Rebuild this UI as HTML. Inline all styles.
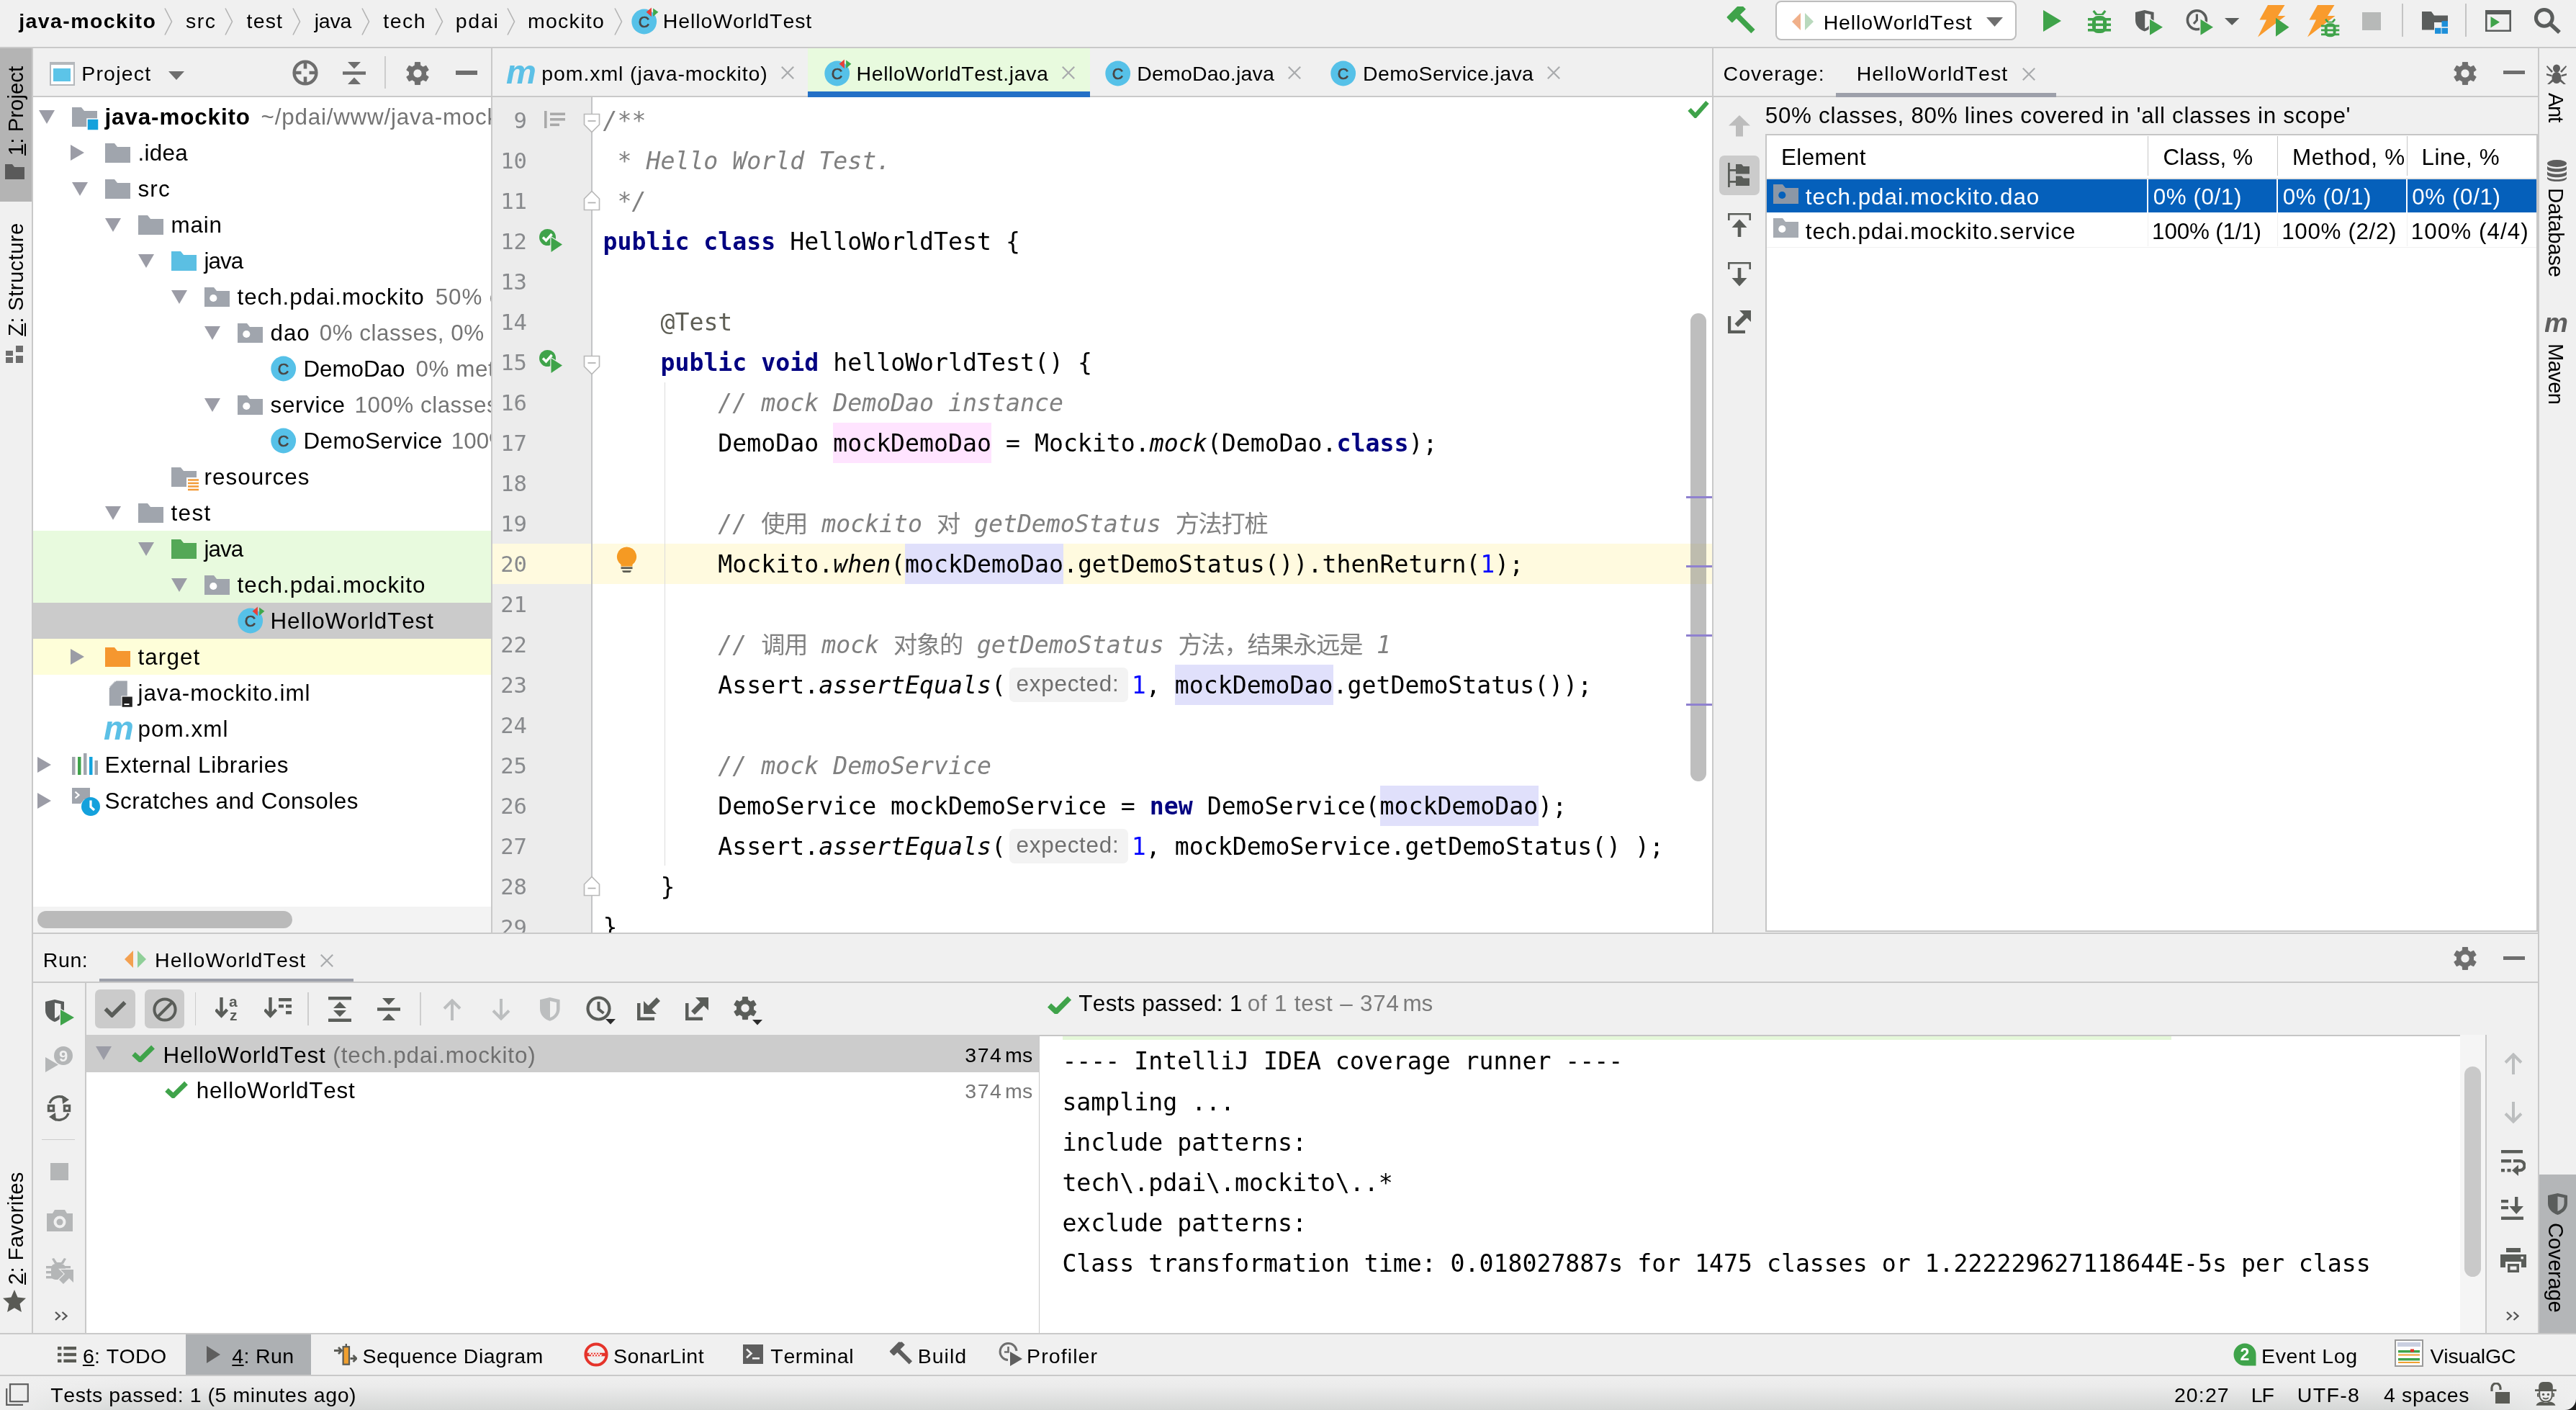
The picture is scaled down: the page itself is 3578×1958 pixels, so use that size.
<!DOCTYPE html>
<html lang="en"><head><meta charset="utf-8"><title>java-mockito – HelloWorldTest.java</title>
<style>
html,body{margin:0;padding:0;}body{width:3578px;height:1958px;position:relative;overflow:hidden;background:#f0f0f0;font-kerning:none;}
#app{will-change:transform;position:absolute;left:0;top:0;width:3578px;height:1958px;overflow:hidden}
#app>*{position:absolute;}
.s{font-family:"Liberation Sans", "Noto Sans CJK SC", sans-serif;white-space:pre;line-height:1;color:#000}
.m{font-family:"DejaVu Sans Mono", "Liberation Mono", "Noto Sans CJK SC", monospace;white-space:pre;line-height:1;color:#000}

</style></head><body><div id="app">
<div style="left:0px;top:0px;width:3578px;height:65px;background:#f0f0f0;"></div>
<div style="left:0px;top:65px;width:3578px;height:2px;background:#c9c9c9;"></div>
<div style="left:0px;top:67px;width:44px;height:1784px;background:#f0f0f0;"></div>
<div style="left:44px;top:67px;width:2px;height:1784px;background:#c9c9c9;"></div>
<div style="left:3527px;top:67px;width:51px;height:1784px;background:#f0f0f0;"></div>
<div style="left:3525px;top:67px;width:2px;height:1784px;background:#c9c9c9;"></div>
<div style="left:46px;top:67px;width:3479px;height:66px;background:#f0f0f0;"></div>
<div style="left:46px;top:133px;width:3479px;height:2px;background:#c9c9c9;"></div>
<div style="left:46px;top:135px;width:636px;height:1160px;background:#fff;"></div>
<div style="left:682px;top:67px;width:2px;height:1228px;background:#c9c9c9;"></div>
<div style="left:684px;top:135px;width:1694px;height:1160px;background:#fff;"></div>
<div style="left:2378px;top:67px;width:2px;height:1228px;background:#c9c9c9;"></div>
<div style="left:2380px;top:135px;width:1145px;height:1160px;background:#f0f0f0;"></div>
<div style="left:46px;top:1295px;width:3479px;height:2px;background:#c9c9c9;"></div>
<div style="left:46px;top:1297px;width:3479px;height:554px;background:#f0f0f0;"></div>
<div style="left:0px;top:1851px;width:3578px;height:2px;background:#c9c9c9;"></div>
<div style="left:0px;top:1853px;width:3578px;height:56px;background:#f0f0f0;"></div>
<div style="left:0px;top:1909px;width:3578px;height:2px;background:#c9c9c9;"></div>
<div style="left:0px;top:1911px;width:3578px;height:47px;background:linear-gradient(to right,#efefef 0%,rgba(239,239,239,0) 5%,rgba(239,239,239,0) 95%,#efefef 100%),linear-gradient(#efefef 0%,#ebebeb 30%,#d5d7d6 100%);"></div>
<span class="s" style="left:26.26px;top:15.07px;font-size:28.5px;font-weight:bold;letter-spacing:1.402px;">java-mockito</span>
<span class="s" style="left:257.93px;top:15.07px;font-size:28.5px;letter-spacing:1.605px;">src</span>
<span class="s" style="left:342.57px;top:15.07px;font-size:28.5px;letter-spacing:1.162px;">test</span>
<span class="s" style="left:436.71px;top:15.07px;font-size:28.5px;letter-spacing:-0.244px;">java</span>
<span class="s" style="left:532.17px;top:15.07px;font-size:28.5px;letter-spacing:1.56px;">tech</span>
<span class="s" style="left:632.68px;top:15.07px;font-size:28.5px;letter-spacing:1.783px;">pdai</span>
<span class="s" style="left:732.92px;top:15.07px;font-size:28.5px;letter-spacing:1.292px;">mockito</span>
<svg style="left:228px;top:11px;" width="12" height="38" viewBox="0 0 12 38"><path d="M1,0.5L10.5,19L1,37.5" stroke="#b3b3b3" stroke-width="1.6" fill="none"/></svg>
<svg style="left:312px;top:11px;" width="12" height="38" viewBox="0 0 12 38"><path d="M1,0.5L10.5,19L1,37.5" stroke="#b3b3b3" stroke-width="1.6" fill="none"/></svg>
<svg style="left:406px;top:11px;" width="12" height="38" viewBox="0 0 12 38"><path d="M1,0.5L10.5,19L1,37.5" stroke="#b3b3b3" stroke-width="1.6" fill="none"/></svg>
<svg style="left:502px;top:11px;" width="12" height="38" viewBox="0 0 12 38"><path d="M1,0.5L10.5,19L1,37.5" stroke="#b3b3b3" stroke-width="1.6" fill="none"/></svg>
<svg style="left:604px;top:11px;" width="12" height="38" viewBox="0 0 12 38"><path d="M1,0.5L10.5,19L1,37.5" stroke="#b3b3b3" stroke-width="1.6" fill="none"/></svg>
<svg style="left:703.5px;top:11px;" width="12" height="38" viewBox="0 0 12 38"><path d="M1,0.5L10.5,19L1,37.5" stroke="#b3b3b3" stroke-width="1.6" fill="none"/></svg>
<svg style="left:852.5px;top:11px;" width="12" height="38" viewBox="0 0 12 38"><path d="M1,0.5L10.5,19L1,37.5" stroke="#b3b3b3" stroke-width="1.6" fill="none"/></svg>
<svg style="left:877px;top:10px;" width="44" height="40" viewBox="0 0 44 40"><circle cx="17.7" cy="20" r="17.4" fill="#56c1e8"/><text x="17.4" y="27.6" font-family="Liberation Sans, sans-serif" font-size="21.5" text-anchor="middle" fill="#4a4644" stroke="#4a4644" stroke-width=".7">C</text><path d="M28.6,-0.5V14.5L19.2,6.8Z" fill="#e8f4f8" opacity=".0"/><path d="M27.9,0.6V13.3L20.6,6.7Z" fill="#e8403a"/><path d="M30.1,1.6V12.9L37.4,6.7Z" fill="#3fa84c"/></svg>
<span class="s" style="left:920.86px;top:15.07px;font-size:28.5px;letter-spacing:0.887px;">HelloWorldTest</span>
<svg style="left:2396px;top:9px;" width="44" height="40" viewBox="0 0 44 40"><g transform="translate(3,3) rotate(-45 16 12)"><rect x="4" y="0" width="24" height="11" rx="1.5" fill="#3fa34a"/><path d="M26,0l5,4v7h-5z" fill="#3fa34a"/><rect x="12.5" y="10" width="7.5" height="30" fill="#3fa34a"/></g></svg>
<div style="left:2466px;top:1px;width:335px;height:55px;background:#fff;border:2px solid #bdbdbd;border-radius:8px;box-sizing:border-box;"></div>
<svg style="left:2489px;top:18px;" width="30" height="24" viewBox="0 0 30 24"><path d="M0,12L12,0V24Z" fill="#f0b08a"/><path d="M18,0L30,12L18,24Z" fill="#b9d9bd"/></svg>
<span class="s" style="left:2532.66px;top:16.87px;font-size:28.5px;letter-spacing:0.872px;">HelloWorldTest</span>
<svg style="left:2759px;top:23.5px;" width="23" height="13" viewBox="0 0 23 13"><path d="M0,0H23L11.5,13Z" fill="#6e6e6e"/></svg>
<svg style="left:2838px;top:14px;" width="25" height="30" viewBox="0 0 25 30"><path d="M0,0L25,15L0,30Z" fill="#3fa34a"/></svg>
<svg style="left:2900px;top:11px;" width="32" height="36" viewBox="0 0 32 36"><g fill="#3fa34a"><path d="M9,3l4,5h6l4-5l2.5,2l-4,5h-11l-4-5z"/><rect x="6" y="11" width="20" height="24" rx="8"/><rect x="0" y="14" width="32" height="3.6"/><rect x="0" y="21.5" width="32" height="3.6"/><rect x="0" y="29" width="32" height="3.6"/></g><rect x="11" y="17.6" width="10" height="3.9" fill="#f0f0f0"/><rect x="11" y="25.1" width="10" height="3.9" fill="#f0f0f0"/></svg>
<svg style="left:2966px;top:14px;" width="40" height="36" viewBox="0 0 40 36"><path d="M0,3L12.8,0L25.6,3V14C25.6,22 20,27 12.8,29.6C5.6,27 0,22 0,14Z" fill="#5a5d5c"/><path d="M13.2,4.5L21.4,6.3V15C21.4,20 18,23.5 13.2,25.5Z" fill="#f0f0f0"/><path d="M20,12.7L38,23.7L20,34.8Z" fill="#3fa34a" stroke="#f0f0f0" stroke-width="2.6" paint-order="stroke"/></svg>
<svg style="left:3036px;top:12px;" width="40" height="38" viewBox="0 0 40 38"><circle cx="15.4" cy="15.8" r="13" fill="none" stroke="#5a5d5c" stroke-width="3.6"/><path d="M15.4,7.5V16L11,21" stroke="#5a5d5c" stroke-width="3.2" fill="none"/><path d="M20.5,14.7L38,25.7L20.5,36.8Z" fill="#3fa34a" stroke="#f0f0f0" stroke-width="2.6" paint-order="stroke"/></svg>
<svg style="left:3090px;top:24.8px;" width="21" height="10" viewBox="0 0 21 10"><path d="M0,0H20.4L10.2,10Z" fill="#5a5d5c"/></svg>
<svg style="left:3136px;top:7px;" width="45" height="46" viewBox="0 0 45 46"><path d="M14,0H37.5L28,15H38.5L0,44.5L12,20.5H2.5Z" fill="#f99b2d"/><path d="M25,17.8L43.5,30.8L25,43.8Z" fill="#3fa34a"/></svg>
<svg style="left:3204.5px;top:7px;" width="46" height="46" viewBox="0 0 46 46"><path d="M14,0H37.5L28,15H38.5L0,44.5L12,20.5H2.5Z" fill="#f99b2d"/><g transform="translate(19,16.5) scale(.79)" fill="#3fa34a" stroke="#f0f0f0" stroke-width="0"><path d="M9,3l4,5h6l4-5l2.5,2l-4,5h-11l-4-5z"/><rect x="6" y="11" width="20" height="24" rx="8"/><rect x="0" y="14" width="32" height="3.6"/><rect x="0" y="21.5" width="32" height="3.6"/><rect x="0" y="29" width="32" height="3.6"/><rect x="11" y="17.6" width="10" height="3.9" fill="#f0f0f0"/><rect x="11" y="25.1" width="10" height="3.9" fill="#f0f0f0"/></g></svg>
<div style="left:3281.3px;top:16.8px;width:25.4px;height:24.8px;background:#b7b9b8;"></div>
<div style="left:3336.3px;top:5px;width:1.6px;height:46px;background:#c4c4c4;"></div>
<svg style="left:3364px;top:16px;" width="37" height="31" viewBox="0 0 37 31"><path d="M0,0H13L17,5.5H36V15H17V25.5H0Z" fill="#5a5d5c"/><g fill="#1d8fd9"><rect x="27.5" y="13.2" width="8.5" height="8"/><rect x="18" y="22.8" width="8.5" height="8"/><rect x="27.5" y="22.8" width="8.5" height="8"/></g></svg>
<div style="left:3424px;top:5px;width:1.6px;height:46px;background:#c4c4c4;"></div>
<svg style="left:3452px;top:14px;" width="36" height="30" viewBox="0 0 36 30"><path d="M0,0H36V30H0Z M2.6,6V27.4H33.4V6Z" fill="#5a5d5c" fill-rule="evenodd"/><path d="M7.5,9L20,16.7L7.5,24.4Z" fill="#3fa34a"/></svg>
<svg style="left:3519px;top:10px;" width="40" height="38" viewBox="0 0 40 38"><circle cx="14.8" cy="14.8" r="11.4" fill="none" stroke="#5a5d5c" stroke-width="5"/><path d="M23,23L36,35" stroke="#5a5d5c" stroke-width="5.6"/></svg>
<div style="left:68.5px;top:86px;width:35px;height:32.5px;background:#fff;border:2.4px solid #b4b8bc;border-top-width:4.5px;box-sizing:border-box;"></div>
<div style="left:74px;top:95px;width:24px;height:18px;background:#5cc4e8;"></div>
<span class="s" style="left:113.16px;top:87.87px;font-size:28.5px;letter-spacing:1.221px;">Project</span>
<svg style="left:233.5px;top:98.5px;" width="22" height="12" viewBox="0 0 22 12"><path d="M0,0H22L11,12Z" fill="#6e6e6e"/></svg>
<svg style="left:404px;top:80.8px;" width="40" height="40" viewBox="0 0 40 40"><circle cx="20" cy="20" r="15.4" fill="none" stroke="#6e6e6e" stroke-width="4.4"/><path d="M20,4V14.5M20,25.5V36M4,20H14.5M25.5,20H36" stroke="#6e6e6e" stroke-width="4.6"/></svg>
<svg style="left:476px;top:85px;" width="32" height="33" viewBox="0 0 32 33"><path d="M7,1H25L16,10.5Z M0,14.2H32V18.8H0Z M16,22.5L25,32H7Z" fill="#6e6e6e"/></svg>
<div style="left:534px;top:77.5px;width:1.6px;height:45px;background:#cdcdcd;"></div>
<svg style="left:564px;top:85.5px;" width="32" height="32" viewBox="0 0 32 32"><path d="M12.20,4.96L12.54,0.38L19.46,0.38L19.80,4.96L21.75,6.04L23.66,7.18L27.80,5.19L31.26,11.19L27.47,13.77L27.50,16.00L27.47,18.23L31.26,20.81L27.80,26.81L23.66,24.82L21.75,25.96L19.80,27.04L19.46,31.62L12.54,31.62L12.20,27.04L10.25,25.96L8.34,24.82L4.20,26.81L0.74,20.81L4.53,18.23L4.50,16.00L4.53,13.77L0.74,11.19L4.20,5.19L8.34,7.18L10.25,6.04ZM22.16,16.00A6.16,6.16 0 1,0 9.84,16.00A6.16,6.16 0 1,0 22.16,16.00Z" fill="#6e6e6e" fill-rule="evenodd" stroke="#6e6e6e" stroke-width="1" stroke-linejoin="round"/></svg>
<div style="left:633px;top:98.4px;width:30px;height:5.2px;background:#6e6e6e;"></div>
<div style="left:46px;top:737.4px;width:636px;height:100px;background:#e8fade;"></div>
<div style="left:46px;top:837.4px;width:636px;height:50px;background:#cbcbcb;"></div>
<div style="left:46px;top:887.4px;width:636px;height:50px;background:#fefed9;"></div>
<svg style="left:53.7px;top:152.9px;" width="22" height="19" viewBox="0 0 22 19"><path d="M0,0H22L11,19Z" fill="#9b9ca6"/></svg>
<svg style="left:99.7px;top:148.9px;" width="40" height="34" viewBox="0 0 40 34"><path d="M0,0H13L17,5H35V27H0Z" fill="#a0a5ad"/><rect x="21" y="16" width="16" height="16" fill="#14a1dc" stroke="#fff" stroke-width="1.5"/></svg>
<span class="s" style="left:145.50px;top:146.82px;font-size:31.4px;font-weight:bold;letter-spacing:0.874px;">java-mockito</span>
<span class="s" style="left:362.62px;top:146.82px;font-size:31.4px;color:#747474;letter-spacing:0.777px;">~/pdai/www/java-mockito</span>
<svg style="left:98.2px;top:201.4px;" width="19" height="22" viewBox="0 0 19 22"><path d="M0,0L19,11L0,22Z" fill="#9b9ca6"/></svg>
<svg style="left:145.7px;top:198.9px;" width="36" height="28" viewBox="0 0 36 28"><path d="M0,0H13L17,5H35V27H0Z" fill="#a0a5ad"/></svg>
<span class="s" style="left:191.50px;top:196.82px;font-size:31.4px;letter-spacing:0.313px;">.idea</span>
<svg style="left:99.7px;top:252.9px;" width="22" height="19" viewBox="0 0 22 19"><path d="M0,0H22L11,19Z" fill="#9b9ca6"/></svg>
<svg style="left:145.7px;top:248.9px;" width="36" height="28" viewBox="0 0 36 28"><path d="M0,0H13L17,5H35V27H0Z" fill="#a0a5ad"/></svg>
<span class="s" style="left:191.50px;top:246.82px;font-size:31.4px;letter-spacing:1.152px;">src</span>
<svg style="left:145.7px;top:302.9px;" width="22" height="19" viewBox="0 0 22 19"><path d="M0,0H22L11,19Z" fill="#9b9ca6"/></svg>
<svg style="left:191.7px;top:298.9px;" width="36" height="28" viewBox="0 0 36 28"><path d="M0,0H13L17,5H35V27H0Z" fill="#a0a5ad"/></svg>
<span class="s" style="left:237.50px;top:296.82px;font-size:31.4px;letter-spacing:0.847px;">main</span>
<svg style="left:191.7px;top:352.9px;" width="22" height="19" viewBox="0 0 22 19"><path d="M0,0H22L11,19Z" fill="#9b9ca6"/></svg>
<svg style="left:237.7px;top:348.9px;" width="36" height="28" viewBox="0 0 36 28"><path d="M0,0H13L17,5H35V27H0Z" fill="#5bbfe3"/></svg>
<span class="s" style="left:283.50px;top:346.82px;font-size:31.4px;letter-spacing:-0.968px;">java</span>
<svg style="left:237.7px;top:402.9px;" width="22" height="19" viewBox="0 0 22 19"><path d="M0,0H22L11,19Z" fill="#9b9ca6"/></svg>
<svg style="left:283.7px;top:398.9px;" width="36" height="28" viewBox="0 0 36 28"><path d="M0,0H13L17,5H35V27H0Z" fill="#a0a5ad"/><circle cx="12.3" cy="15" r="5.1" fill="#fff"/></svg>
<span class="s" style="left:329.50px;top:396.82px;font-size:31.4px;letter-spacing:0.936px;">tech.pdai.mockito</span>
<span class="s" style="left:604.74px;top:396.82px;font-size:31.4px;color:#747474;letter-spacing:0.866px;">50% classes</span>
<svg style="left:283.7px;top:452.9px;" width="22" height="19" viewBox="0 0 22 19"><path d="M0,0H22L11,19Z" fill="#9b9ca6"/></svg>
<svg style="left:329.7px;top:448.9px;" width="36" height="28" viewBox="0 0 36 28"><path d="M0,0H13L17,5H35V27H0Z" fill="#a0a5ad"/><circle cx="12.3" cy="15" r="5.1" fill="#fff"/></svg>
<span class="s" style="left:375.50px;top:446.82px;font-size:31.4px;letter-spacing:0.968px;">dao</span>
<span class="s" style="left:443.68px;top:446.82px;font-size:31.4px;color:#747474;letter-spacing:0.527px;">0% classes, 0% lines</span>
<svg style="left:375.7px;top:492.4px;" width="36" height="40" viewBox="0 0 36 40"><circle cx="17.7" cy="20" r="17.4" fill="#56c1e8"/><text x="17.4" y="27.6" font-family="Liberation Sans, sans-serif" font-size="21.5" text-anchor="middle" fill="#4a4644" stroke="#4a4644" stroke-width=".7">C</text></svg>
<span class="s" style="left:421.50px;top:496.82px;font-size:31.4px;letter-spacing:-0.077px;">DemoDao</span>
<span class="s" style="left:577.58px;top:496.82px;font-size:31.4px;color:#747474;letter-spacing:0.527px;">0% methods</span>
<svg style="left:283.7px;top:552.9px;" width="22" height="19" viewBox="0 0 22 19"><path d="M0,0H22L11,19Z" fill="#9b9ca6"/></svg>
<svg style="left:329.7px;top:548.9px;" width="36" height="28" viewBox="0 0 36 28"><path d="M0,0H13L17,5H35V27H0Z" fill="#a0a5ad"/><circle cx="12.3" cy="15" r="5.1" fill="#fff"/></svg>
<span class="s" style="left:375.50px;top:546.82px;font-size:31.4px;letter-spacing:0.683px;">service</span>
<span class="s" style="left:492.51px;top:546.82px;font-size:31.4px;color:#747474;letter-spacing:0.498px;">100% classes, 100% lines</span>
<svg style="left:375.7px;top:592.4px;" width="36" height="40" viewBox="0 0 36 40"><circle cx="17.7" cy="20" r="17.4" fill="#56c1e8"/><text x="17.4" y="27.6" font-family="Liberation Sans, sans-serif" font-size="21.5" text-anchor="middle" fill="#4a4644" stroke="#4a4644" stroke-width=".7">C</text></svg>
<span class="s" style="left:421.50px;top:596.82px;font-size:31.4px;letter-spacing:0.426px;">DemoService</span>
<span class="s" style="left:626.71px;top:596.82px;font-size:31.4px;color:#747474;letter-spacing:0.055px;">100% methods</span>
<svg style="left:237.7px;top:648.9px;" width="40" height="34" viewBox="0 0 40 34"><path d="M0,0H13L17,5H35V27H0Z" fill="#a0a5ad"/><rect x="21" y="14" width="17" height="19" fill="#fff"/><path d="M23,17.5H38M23,22H38M23,26.5H38M23,31H38" stroke="#f29b38" stroke-width="2.6"/></svg>
<span class="s" style="left:283.50px;top:646.82px;font-size:31.4px;letter-spacing:1.022px;">resources</span>
<svg style="left:145.7px;top:702.9px;" width="22" height="19" viewBox="0 0 22 19"><path d="M0,0H22L11,19Z" fill="#9b9ca6"/></svg>
<svg style="left:191.7px;top:698.9px;" width="36" height="28" viewBox="0 0 36 28"><path d="M0,0H13L17,5H35V27H0Z" fill="#a0a5ad"/></svg>
<span class="s" style="left:237.50px;top:696.82px;font-size:31.4px;letter-spacing:1.359px;">test</span>
<svg style="left:191.7px;top:752.9px;" width="22" height="19" viewBox="0 0 22 19"><path d="M0,0H22L11,19Z" fill="#9b9ca6"/></svg>
<svg style="left:237.7px;top:748.9px;" width="36" height="28" viewBox="0 0 36 28"><path d="M0,0H13L17,5H35V27H0Z" fill="#54a857"/></svg>
<span class="s" style="left:283.50px;top:746.82px;font-size:31.4px;letter-spacing:-0.968px;">java</span>
<svg style="left:237.7px;top:802.9px;" width="22" height="19" viewBox="0 0 22 19"><path d="M0,0H22L11,19Z" fill="#9b9ca6"/></svg>
<svg style="left:283.7px;top:798.9px;" width="36" height="28" viewBox="0 0 36 28"><path d="M0,0H13L17,5H35V27H0Z" fill="#a0a5ad"/><circle cx="12.3" cy="15" r="5.1" fill="#fff"/></svg>
<span class="s" style="left:329.50px;top:796.82px;font-size:31.4px;letter-spacing:1.049px;">tech.pdai.mockito</span>
<svg style="left:329.7px;top:839.4px;" width="44" height="42" viewBox="0 -3 44 42"><circle cx="17.7" cy="20" r="17.4" fill="#56c1e8"/><text x="17.4" y="27.6" font-family="Liberation Sans, sans-serif" font-size="21.5" text-anchor="middle" fill="#4a4644" stroke="#4a4644" stroke-width=".7">C</text><path d="M28.6,-0.5V14.5L19.2,6.8Z" fill="#e8f4f8" opacity=".0"/><path d="M27.9,0.6V13.3L20.6,6.7Z" fill="#e8403a"/><path d="M30.1,1.6V12.9L37.4,6.7Z" fill="#3fa84c"/></svg>
<span class="s" style="left:375.50px;top:846.82px;font-size:31.4px;letter-spacing:0.91px;">HelloWorldTest</span>
<svg style="left:98.2px;top:901.4px;" width="19" height="22" viewBox="0 0 19 22"><path d="M0,0L19,11L0,22Z" fill="#9b9ca6"/></svg>
<svg style="left:145.7px;top:898.9px;" width="36" height="28" viewBox="0 0 36 28"><path d="M0,0H13L17,5H35V27H0Z" fill="#f5972f"/></svg>
<span class="s" style="left:191.50px;top:896.82px;font-size:31.4px;letter-spacing:1.081px;">target</span>
<svg style="left:148.7px;top:945.4px;" width="38" height="40" viewBox="0 0 38 40"><path d="M12.5,0.5H27.8V34.9H2.8V10.5Z" fill="#a0a5ad"/><path d="M2.8,9L11,0.5V9Z" fill="#a0a5ad" opacity=".65"/><rect x="19.5" y="21.4" width="16" height="16" fill="#fff"/><rect x="20.6" y="22.5" width="14.2" height="14.2" fill="#222"/><rect x="23.5" y="32" width="7" height="2" fill="#fff"/></svg>
<span class="s" style="left:191.50px;top:946.82px;font-size:31.4px;letter-spacing:0.938px;">java-mockito.iml</span>
<svg style="left:143.7px;top:995.4px;" width="42" height="36" viewBox="0 0 42 36"><text x="0" y="32" font-family="Liberation Sans, sans-serif" font-size="47" font-weight="bold" font-style="italic" fill="#5cc0e6">m</text></svg>
<span class="s" style="left:191.50px;top:996.82px;font-size:31.4px;letter-spacing:1.046px;">pom.xml</span>
<svg style="left:52.2px;top:1051.4px;" width="19" height="22" viewBox="0 0 19 22"><path d="M0,0L19,11L0,22Z" fill="#9b9ca6"/></svg>
<svg style="left:99.7px;top:1046.4px;" width="36" height="30" viewBox="0 0 36 30"><g><rect x="0" y="5" width="4.5" height="25" fill="#a0a5ad"/><rect x="8" y="5" width="4.5" height="25" fill="#3fa34a"/><rect x="16" y="0" width="4.5" height="30" fill="#a0a5ad"/><rect x="24" y="5" width="4.5" height="25" fill="#14a3dd"/><rect x="31.5" y="10" width="4.5" height="20" fill="#a0a5ad"/></g></svg>
<span class="s" style="left:145.50px;top:1046.82px;font-size:31.4px;letter-spacing:0.632px;">External Libraries</span>
<svg style="left:52.2px;top:1101.4px;" width="19" height="22" viewBox="0 0 19 22"><path d="M0,0L19,11L0,22Z" fill="#9b9ca6"/></svg>
<svg style="left:99.7px;top:1094.4px;" width="40" height="40" viewBox="0 0 40 40"><path d="M0,0H25V16H17L12,22H0Z" fill="#a0a5ad"/><path d="M4.5,5.5L9.5,10L4.5,14.5" stroke="#fff" stroke-width="2.2" fill="none"/><circle cx="26" cy="26" r="13" fill="#14a1dc"/><path d="M26,17.5V26.5L31,31" stroke="#fff" stroke-width="3.2" fill="none"/></svg>
<span class="s" style="left:145.50px;top:1096.82px;font-size:31.4px;letter-spacing:0.561px;">Scratches and Consoles</span>
<div style="left:682px;top:135px;width:2px;height:1160px;background:#c9c9c9;"></div>
<div style="left:46px;top:1258.5px;width:636px;height:36.5px;background:#f3f3f3;"></div>
<div style="left:51.5px;top:1264.8px;width:354.5px;height:24px;background:#bababa;border-radius:12px;"></div>
<svg style="left:703px;top:84px;" width="42" height="36" viewBox="0 0 42 36"><text x="0" y="32" font-family="Liberation Sans, sans-serif" font-size="47" font-weight="bold" font-style="italic" fill="#5cc0e6">m</text></svg>
<span class="s" style="left:752.28px;top:87.67px;font-size:28.5px;letter-spacing:0.907px;">pom.xml (java-mockito)</span>
<svg style="left:1085px;top:92px;" width="19" height="19" viewBox="0 0 19 19"><path d="M0.8,0.8L17.2,17.2M17.2,0.8L0.8,17.2" stroke="#a9abad" stroke-width="2.2" fill="none"/></svg>
<div style="left:1122px;top:67px;width:391.6px;height:66px;background:#e8fade;"></div>
<div style="left:1122px;top:127.3px;width:391.6px;height:7.7px;background:#2470c6;"></div>
<svg style="left:1144.5px;top:78.5px;" width="44" height="42" viewBox="0 -3 44 42"><circle cx="17.7" cy="20" r="17.4" fill="#56c1e8"/><text x="17.4" y="27.6" font-family="Liberation Sans, sans-serif" font-size="21.5" text-anchor="middle" fill="#4a4644" stroke="#4a4644" stroke-width=".7">C</text><path d="M28.6,-0.5V14.5L19.2,6.8Z" fill="#e8f4f8" opacity=".0"/><path d="M27.9,0.6V13.3L20.6,6.7Z" fill="#e8403a"/><path d="M30.1,1.6V12.9L37.4,6.7Z" fill="#3fa84c"/></svg>
<span class="s" style="left:1189.46px;top:87.67px;font-size:28.5px;letter-spacing:0.634px;">HelloWorldTest.java</span>
<svg style="left:1475px;top:92px;" width="19" height="19" viewBox="0 0 19 19"><path d="M0.8,0.8L17.2,17.2M17.2,0.8L0.8,17.2" stroke="#a9abad" stroke-width="2.2" fill="none"/></svg>
<svg style="left:1534.6px;top:81.5px;" width="36" height="40" viewBox="0 0 36 40"><circle cx="17.7" cy="20" r="17.4" fill="#56c1e8"/><text x="17.4" y="27.6" font-family="Liberation Sans, sans-serif" font-size="21.5" text-anchor="middle" fill="#4a4644" stroke="#4a4644" stroke-width=".7">C</text></svg>
<span class="s" style="left:1579.16px;top:87.67px;font-size:28.5px;letter-spacing:0.191px;">DemoDao.java</span>
<svg style="left:1789px;top:92px;" width="19" height="19" viewBox="0 0 19 19"><path d="M0.8,0.8L17.2,17.2M17.2,0.8L0.8,17.2" stroke="#a9abad" stroke-width="2.2" fill="none"/></svg>
<svg style="left:1848px;top:81.5px;" width="36" height="40" viewBox="0 0 36 40"><circle cx="17.7" cy="20" r="17.4" fill="#56c1e8"/><text x="17.4" y="27.6" font-family="Liberation Sans, sans-serif" font-size="21.5" text-anchor="middle" fill="#4a4644" stroke="#4a4644" stroke-width=".7">C</text></svg>
<span class="s" style="left:1893.06px;top:87.67px;font-size:28.5px;letter-spacing:0.37px;">DemoService.java</span>
<svg style="left:2148.6px;top:92px;" width="19" height="19" viewBox="0 0 19 19"><path d="M0.8,0.8L17.2,17.2M17.2,0.8L0.8,17.2" stroke="#a9abad" stroke-width="2.2" fill="none"/></svg>
<div style="left:684px;top:135px;width:1694px;height:1160px;background:#fff;"></div>
<div style="left:684px;top:135px;width:137px;height:1160px;background:#ececec;"></div>
<div style="left:684px;top:754.73px;width:1694px;height:56.03px;background:#fffadf;"></div>
<div style="left:684px;top:754.73px;width:137px;height:56.03px;background:#fffadf;"></div>
<div style="left:821px;top:135px;width:2px;height:1160px;background:#c3c4c6;"></div>
<div style="left:922.5px;top:530.61px;width:1.5px;height:671.36px;background:#dcdcdc;"></div>
<div style="left:1157.34px;top:586.64px;width:219.89px;height:56.03px;background:#ffe4ff;"></div>
<div style="left:1257.29px;top:754.73px;width:219.89px;height:56.03px;background:#e0e0fb;"></div>
<div style="left:1632px;top:922.82px;width:220px;height:56.03px;background:#e0e0fb;"></div>
<div style="left:1916.96px;top:1090.91px;width:219.89px;height:56.03px;background:#e0e0fb;"></div>
<span class="m" style="left:0.00px;top:152.91px;font-size:30.6px;color:#888a8d;left:auto;right:2846px;">9</span>
<span class="m" style="left:837.50px;top:150.71px;font-size:33.2px;"><i style="color:#808080">/**</i></span>
<span class="m" style="left:0.00px;top:208.94px;font-size:30.6px;color:#888a8d;left:auto;right:2846px;">10</span>
<span class="m" style="left:837.50px;top:206.74px;font-size:33.2px;"><i style="color:#808080"> * Hello World Test.</i></span>
<span class="m" style="left:0.00px;top:264.97px;font-size:30.6px;color:#888a8d;left:auto;right:2846px;">11</span>
<span class="m" style="left:837.50px;top:262.77px;font-size:33.2px;"><i style="color:#808080"> */</i></span>
<span class="m" style="left:0.00px;top:321.00px;font-size:30.6px;color:#888a8d;left:auto;right:2846px;">12</span>
<span class="m" style="left:837.50px;top:318.80px;font-size:33.2px;"><b style="color:#000080">public class</b> HelloWorldTest {</span>
<span class="m" style="left:0.00px;top:377.03px;font-size:30.6px;color:#888a8d;left:auto;right:2846px;">13</span>
<span class="m" style="left:0.00px;top:433.06px;font-size:30.6px;color:#888a8d;left:auto;right:2846px;">14</span>
<span class="m" style="left:837.50px;top:430.86px;font-size:33.2px;">    <span style="color:#5e5e55">@Test</span></span>
<span class="m" style="left:0.00px;top:489.09px;font-size:30.6px;color:#888a8d;left:auto;right:2846px;">15</span>
<span class="m" style="left:837.50px;top:486.89px;font-size:33.2px;">    <b style="color:#000080">public void</b> helloWorldTest() {</span>
<span class="m" style="left:0.00px;top:545.12px;font-size:30.6px;color:#888a8d;left:auto;right:2846px;">16</span>
<span class="m" style="left:837.50px;top:542.92px;font-size:33.2px;">        <i style="color:#808080">// mock DemoDao instance</i></span>
<span class="m" style="left:0.00px;top:601.15px;font-size:30.6px;color:#888a8d;left:auto;right:2846px;">17</span>
<span class="m" style="left:837.50px;top:598.95px;font-size:33.2px;">        DemoDao mockDemoDao = Mockito.<i>mock</i>(DemoDao.<b style="color:#000080">class</b>);</span>
<span class="m" style="left:0.00px;top:657.18px;font-size:30.6px;color:#888a8d;left:auto;right:2846px;">18</span>
<span class="m" style="left:0.00px;top:713.21px;font-size:30.6px;color:#888a8d;left:auto;right:2846px;">19</span>
<span class="m" style="left:837.50px;top:711.01px;font-size:33.2px;">        <i style="color:#808080">// <span style="font-style:normal;letter-spacing:-1.25px">使用</span> mockito <span style="font-style:normal;letter-spacing:-1.25px">对</span> getDemoStatus <span style="font-style:normal;letter-spacing:-1.25px">方法打桩</span></i></span>
<span class="m" style="left:0.00px;top:769.24px;font-size:30.6px;color:#888a8d;left:auto;right:2846px;">20</span>
<span class="m" style="left:837.50px;top:767.04px;font-size:33.2px;">        Mockito.<i>when</i>(mockDemoDao.getDemoStatus()).thenReturn(<span style="color:#0000ff">1</span>);</span>
<span class="m" style="left:0.00px;top:825.27px;font-size:30.6px;color:#888a8d;left:auto;right:2846px;">21</span>
<span class="m" style="left:0.00px;top:881.30px;font-size:30.6px;color:#888a8d;left:auto;right:2846px;">22</span>
<span class="m" style="left:837.50px;top:879.10px;font-size:33.2px;">        <i style="color:#808080">// <span style="font-style:normal;letter-spacing:-1.25px">调用</span> mock <span style="font-style:normal;letter-spacing:-1.25px">对象的</span> getDemoStatus <span style="font-style:normal;letter-spacing:-1.25px">方法，结果永远是</span> 1</i></span>
<span class="m" style="left:0.00px;top:937.33px;font-size:30.6px;color:#888a8d;left:auto;right:2846px;">23</span>
<span class="m" style="left:837.50px;top:935.13px;font-size:33.2px;">        Assert.<i>assertEquals</i>(<span style="display:inline-block;width:174.8px;height:1px;vertical-align:baseline;position:relative"><span style="position:absolute;left:4.8px;top:-35.2px;width:165.7px;height:48.2px;background:#f3f3f3;border-radius:7px"></span><span class="s" style="position:absolute;left:14.6px;top:-27.8px;font-size:31.4px;color:#6e6e6e;letter-spacing:.75px;font-style:normal;font-weight:normal">expected:</span></span><span style="color:#0000ff">1</span>, mockDemoDao.getDemoStatus());</span>
<span class="m" style="left:0.00px;top:993.36px;font-size:30.6px;color:#888a8d;left:auto;right:2846px;">24</span>
<span class="m" style="left:0.00px;top:1049.39px;font-size:30.6px;color:#888a8d;left:auto;right:2846px;">25</span>
<span class="m" style="left:837.50px;top:1047.19px;font-size:33.2px;">        <i style="color:#808080">// mock DemoService</i></span>
<span class="m" style="left:0.00px;top:1105.42px;font-size:30.6px;color:#888a8d;left:auto;right:2846px;">26</span>
<span class="m" style="left:837.50px;top:1103.22px;font-size:33.2px;">        DemoService mockDemoService = <b style="color:#000080">new</b> DemoService(mockDemoDao);</span>
<span class="m" style="left:0.00px;top:1161.45px;font-size:30.6px;color:#888a8d;left:auto;right:2846px;">27</span>
<span class="m" style="left:837.50px;top:1159.25px;font-size:33.2px;">        Assert.<i>assertEquals</i>(<span style="display:inline-block;width:174.8px;height:1px;vertical-align:baseline;position:relative"><span style="position:absolute;left:4.8px;top:-35.2px;width:165.7px;height:48.2px;background:#f3f3f3;border-radius:7px"></span><span class="s" style="position:absolute;left:14.6px;top:-27.8px;font-size:31.4px;color:#6e6e6e;letter-spacing:.75px;font-style:normal;font-weight:normal">expected:</span></span><span style="color:#0000ff">1</span>, mockDemoService.getDemoStatus() );</span>
<span class="m" style="left:0.00px;top:1217.48px;font-size:30.6px;color:#888a8d;left:auto;right:2846px;">28</span>
<span class="m" style="left:837.50px;top:1215.28px;font-size:33.2px;">    }</span>
<span class="m" style="left:0.00px;top:1273.51px;font-size:30.6px;color:#888a8d;left:auto;right:2846px;">29</span>
<span class="m" style="left:837.50px;top:1271.31px;font-size:33.2px;">}</span>
<svg style="left:756px;top:154px;" width="29" height="24" viewBox="0 0 29 24"><rect x="0" y="0" width="3.6" height="24" fill="#a9a9a9"/><rect x="8" y="2.5" width="21" height="3.6" fill="#a9a9a9"/><rect x="8" y="10" width="21" height="3.6" fill="#a9a9a9"/><rect x="8" y="17.5" width="13" height="3.6" fill="#a9a9a9"/></svg>
<svg style="left:749px;top:317.79px;" width="32" height="32" viewBox="0 0 32 32"><circle cx="11.5" cy="11.5" r="11.5" fill="#3fa34a"/><path d="M5,11.5L9.5,16L17.5,7" stroke="#fff" stroke-width="3.4" fill="none"/><path d="M16.5,11.5L32,21.5L16.5,32Z" fill="#3fa34a" stroke="#ececec" stroke-width="2.5" paint-order="stroke"/></svg>
<svg style="left:749px;top:485.88px;" width="32" height="32" viewBox="0 0 32 32"><circle cx="11.5" cy="11.5" r="11.5" fill="#3fa34a"/><path d="M5,11.5L9.5,16L17.5,7" stroke="#fff" stroke-width="3.4" fill="none"/><path d="M16.5,11.5L32,21.5L16.5,32Z" fill="#3fa34a" stroke="#ececec" stroke-width="2.5" paint-order="stroke"/></svg>
<svg style="left:810px;top:156.8px;" width="24" height="29" viewBox="0 0 24 29"><path d="M1.5,1.5H22.5V16L12,26.5L1.5,16Z" fill="#fff" stroke="#b9b9b9" stroke-width="1.7"/><path d="M6.5,11H17.5" stroke="#b0b0b0" stroke-width="1.7"/></svg>
<svg style="left:810px;top:263.76px;" width="24" height="29" viewBox="0 0 24 29"><path d="M1.5,27.5H22.5V12L12,1.5L1.5,12Z" fill="#fff" stroke="#b9b9b9" stroke-width="1.7"/><path d="M6.5,17.5H17.5" stroke="#b0b0b0" stroke-width="1.7"/></svg>
<svg style="left:810px;top:492.98px;" width="24" height="29" viewBox="0 0 24 29"><path d="M1.5,1.5H22.5V16L12,26.5L1.5,16Z" fill="#fff" stroke="#b9b9b9" stroke-width="1.7"/><path d="M6.5,11H17.5" stroke="#b0b0b0" stroke-width="1.7"/></svg>
<svg style="left:810px;top:1216.27px;" width="24" height="29" viewBox="0 0 24 29"><path d="M1.5,27.5H22.5V12L12,1.5L1.5,12Z" fill="#fff" stroke="#b9b9b9" stroke-width="1.7"/><path d="M6.5,17.5H17.5" stroke="#b0b0b0" stroke-width="1.7"/></svg>
<svg style="left:856px;top:758.5px;" width="29" height="37" viewBox="0 0 29 37"><path d="M14.5,0.5a13.6,13.6 0 0 1 8,24.6v2.4h-16v-2.4a13.6,13.6 0 0 1 8-24.6z" fill="#f59a23"/><rect x="6.5" y="28.3" width="16" height="2.8" fill="#5b5b52"/><path d="M8.2,33.2H20.8A3,3 0 0 1 17.8,36H11.2A3,3 0 0 1 8.2,33.2Z" fill="#5b5b52"/></svg>
<div style="left:2348px;top:435px;width:22px;height:650px;background:rgba(125,125,125,.5);border-radius:11px;"></div>
<div style="left:2342px;top:688.5px;width:36px;height:3.4px;background:#8f81cf;"></div>
<div style="left:2342px;top:784.5px;width:36px;height:3.4px;background:#8f81cf;"></div>
<div style="left:2342px;top:880.5px;width:36px;height:3.4px;background:#8f81cf;"></div>
<div style="left:2342px;top:976.5px;width:36px;height:3.4px;background:#8f81cf;"></div>
<svg style="left:2344px;top:139px;" width="30" height="25" viewBox="0 0 30 25"><path d="M2.5,13.0L10.8,21.8L27.5,3" stroke="#3fa34a" stroke-width="6" fill="none" stroke-linejoin="miter"/></svg>
<div style="left:46px;top:1295px;width:3479px;height:2px;background:#c9c9c9;"></div>
<div style="left:46px;top:1297px;width:3479px;height:40px;background:#f0f0f0;"></div>
<span class="s" style="left:2393.57px;top:87.87px;font-size:28.5px;letter-spacing:1.064px;">Coverage:</span>
<span class="s" style="left:2578.66px;top:87.87px;font-size:28.5px;letter-spacing:1.133px;">HelloWorldTest</span>
<svg style="left:2809px;top:94px;" width="19" height="19" viewBox="0 0 19 19"><path d="M0.8,0.8L17.2,17.2M17.2,0.8L0.8,17.2" stroke="#a9abad" stroke-width="2.2" fill="none"/></svg>
<div style="left:2550px;top:129.2px;width:306px;height:5.6px;background:#9da0aa;"></div>
<svg style="left:3408px;top:85.5px;" width="32" height="32" viewBox="0 0 32 32"><path d="M12.20,4.96L12.54,0.38L19.46,0.38L19.80,4.96L21.75,6.04L23.66,7.18L27.80,5.19L31.26,11.19L27.47,13.77L27.50,16.00L27.47,18.23L31.26,20.81L27.80,26.81L23.66,24.82L21.75,25.96L19.80,27.04L19.46,31.62L12.54,31.62L12.20,27.04L10.25,25.96L8.34,24.82L4.20,26.81L0.74,20.81L4.53,18.23L4.50,16.00L4.53,13.77L0.74,11.19L4.20,5.19L8.34,7.18L10.25,6.04ZM22.16,16.00A6.16,6.16 0 1,0 9.84,16.00A6.16,6.16 0 1,0 22.16,16.00Z" fill="#6e6e6e" fill-rule="evenodd" stroke="#6e6e6e" stroke-width="1" stroke-linejoin="round"/></svg>
<div style="left:3477px;top:97.6px;width:30px;height:5.2px;background:#6e6e6e;"></div>
<svg style="left:2400px;top:159px;" width="32" height="32" viewBox="0 0 32 32"><path d="M16,1L31,15.5H21V30.5H11V15.5H1Z" fill="#bdbdbd"/></svg>
<div style="left:2388px;top:215.7px;width:55.5px;height:55px;background:#cbcbcb;border-radius:7px;"></div>
<svg style="left:2400px;top:226px;" width="32" height="34" viewBox="0 0 32 34"><g fill="#5a5d59"><rect x="0" y="0" width="2.8" height="34"/><rect x="2" y="9" width="9" height="2.8"/><rect x="2" y="25" width="9" height="2.8"/><path d="M11,2H19L21.5,5H30V15.5H11Z"/><path d="M11,18.5H19L21.5,21.5H30V32H11Z"/></g></svg>
<svg style="left:2400px;top:296px;" width="32" height="34" viewBox="0 0 32 34"><path d="M1.3,10V1.3H30.7V10" stroke="#5a5d59" stroke-width="2.6" fill="none"/><path d="M16,8.5L26.5,20H18.3V33H13.7V20H5.5Z" fill="#5a5d59"/></svg>
<svg style="left:2400px;top:364px;" width="32" height="34" viewBox="0 0 32 34"><path d="M1.3,10V1.3H30.7V10" stroke="#5a5d59" stroke-width="2.6" fill="none"/><path d="M16,33.5L26.5,22H18.3V8H13.7V22H5.5Z" fill="#5a5d59"/></svg>
<svg style="left:2400px;top:431px;" width="32" height="32" viewBox="0 0 32 32"><path d="M0,8H4.2V27.8H24V32H0Z" fill="#5a5d59"/><path d="M16,0H32V16L26.5,10.5L14,23L9.5,18.5L22,6Z" fill="#5a5d59"/></svg>
<span class="s" style="left:2451.74px;top:144.72px;font-size:31.4px;letter-spacing:0.697px;">50% classes, 80% lines covered in 'all classes in scope'</span>
<div style="left:2452px;top:185.5px;width:1073px;height:1108.5px;background:#fff;border:2px solid #c6c6c6;box-sizing:border-box;"></div>
<div style="left:2454px;top:187.5px;width:1069px;height:59px;background:#fff;"></div>
<div style="left:2454px;top:247px;width:1069px;height:1.5px;background:#e9e7e5;"></div>
<div style="left:2982.5px;top:189px;width:1.8px;height:55px;background:#c6c6c6;"></div>
<div style="left:3162.5px;top:189px;width:1.8px;height:55px;background:#c6c6c6;"></div>
<div style="left:3342.5px;top:189px;width:1.8px;height:55px;background:#c6c6c6;"></div>
<span class="s" style="left:2474.03px;top:202.92px;font-size:31.4px;letter-spacing:0.372px;">Element</span>
<span class="s" style="left:3004.43px;top:202.92px;font-size:31.4px;letter-spacing:0.116px;">Class, %</span>
<span class="s" style="left:3183.93px;top:202.92px;font-size:31.4px;letter-spacing:0.765px;">Method, %</span>
<span class="s" style="left:3363.43px;top:202.92px;font-size:31.4px;letter-spacing:0.579px;">Line, %</span>
<div style="left:2454px;top:248.6px;width:528px;height:46px;background:#0560bb;"></div>
<div style="left:2984px;top:248.6px;width:178px;height:46px;background:#0560bb;"></div>
<div style="left:3164px;top:248.6px;width:178px;height:46px;background:#0560bb;"></div>
<div style="left:3344px;top:248.6px;width:178.5px;height:46px;background:#0560bb;"></div>
<svg style="left:2462.5px;top:255.5px;" width="36" height="28" viewBox="0 0 36 28"><path d="M0,0H13L17,5H35V27H0Z" fill="#8c97a6"/><circle cx="12.3" cy="15" r="5.1" fill="#0560bb"/></svg>
<span class="s" style="left:2507.83px;top:257.72px;font-size:31.4px;color:#fff;letter-spacing:0.954px;">tech.pdai.mockito.dao</span>
<span class="s" style="left:2990.68px;top:257.72px;font-size:31.4px;color:#fff;letter-spacing:0.576px;">0% (0/1)</span>
<span class="s" style="left:3170.78px;top:257.72px;font-size:31.4px;color:#fff;letter-spacing:0.576px;">0% (0/1)</span>
<span class="s" style="left:3350.28px;top:257.72px;font-size:31.4px;color:#fff;letter-spacing:0.576px;">0% (0/1)</span>
<svg style="left:2462.5px;top:303px;" width="36" height="28" viewBox="0 0 36 28"><path d="M0,0H13L17,5H35V27H0Z" fill="#a6abb2"/><circle cx="12.3" cy="15" r="5.1" fill="#fff"/></svg>
<span class="s" style="left:2507.83px;top:305.72px;font-size:31.4px;letter-spacing:0.922px;">tech.pdai.mockito.service</span>
<span class="s" style="left:2989.11px;top:305.72px;font-size:31.4px;letter-spacing:-0.192px;">100% (1/1)</span>
<span class="s" style="left:3169.21px;top:305.72px;font-size:31.4px;letter-spacing:0.641px;">100% (2/2)</span>
<span class="s" style="left:3348.81px;top:305.72px;font-size:31.4px;letter-spacing:1.03px;">100% (4/4)</span>
<div style="left:2982.5px;top:296px;width:1.6px;height:46px;background:#f0f0f0;"></div>
<div style="left:3162.5px;top:296px;width:1.6px;height:46px;background:#f0f0f0;"></div>
<div style="left:3342.5px;top:296px;width:1.6px;height:46px;background:#f0f0f0;"></div>
<div style="left:2454px;top:342.5px;width:1069px;height:1.5px;background:#f0f0f0;"></div>
<span class="s" style="left:59.86px;top:1319.27px;font-size:28.5px;letter-spacing:0.574px;">Run:</span>
<svg style="left:173px;top:1319.5px;" width="30" height="24" viewBox="0 0 30 24"><path d="M0,12L12,0V24Z" fill="#f3a050"/><path d="M18,0L30,12L18,24Z" fill="#8fcf98"/></svg>
<span class="s" style="left:214.96px;top:1319.27px;font-size:28.5px;letter-spacing:1.11px;">HelloWorldTest</span>
<svg style="left:444.5px;top:1324.5px;" width="19" height="19" viewBox="0 0 19 19"><path d="M0.8,0.8L17.2,17.2M17.2,0.8L0.8,17.2" stroke="#a9abad" stroke-width="2.2" fill="none"/></svg>
<div style="left:138px;top:1359.3px;width:353.3px;height:5.4px;background:#9da0aa;"></div>
<svg style="left:3408px;top:1315px;" width="32" height="32" viewBox="0 0 32 32"><path d="M12.20,4.96L12.54,0.38L19.46,0.38L19.80,4.96L21.75,6.04L23.66,7.18L27.80,5.19L31.26,11.19L27.47,13.77L27.50,16.00L27.47,18.23L31.26,20.81L27.80,26.81L23.66,24.82L21.75,25.96L19.80,27.04L19.46,31.62L12.54,31.62L12.20,27.04L10.25,25.96L8.34,24.82L4.20,26.81L0.74,20.81L4.53,18.23L4.50,16.00L4.53,13.77L0.74,11.19L4.20,5.19L8.34,7.18L10.25,6.04ZM22.16,16.00A6.16,6.16 0 1,0 9.84,16.00A6.16,6.16 0 1,0 22.16,16.00Z" fill="#6e6e6e" fill-rule="evenodd" stroke="#6e6e6e" stroke-width="1" stroke-linejoin="round"/></svg>
<div style="left:3477px;top:1328px;width:30px;height:5.2px;background:#6e6e6e;"></div>
<div style="left:46px;top:1363px;width:3479px;height:2px;background:#c9c9c9;"></div>
<div style="left:117.5px;top:1365px;width:2px;height:486px;background:#c9c9c9;"></div>
<svg style="left:63px;top:1388px;" width="40" height="36" viewBox="0 0 40 36"><path d="M0,3L13,0L26,3V15C26,23 20,28.5 13,31C6,28.5 0,23 0,15Z" fill="#5a5d5c"/><path d="M13,4.5L21.5,6.3V15C21.5,20 18,24 13,26Z" fill="#f0f0f0"/><path d="M21,14L40,25L21,36Z" fill="#3fa34a" stroke="#f0f0f0" stroke-width="2.5" paint-order="stroke"/></svg>
<svg style="left:63px;top:1453px;" width="40" height="36" viewBox="0 0 40 36"><path d="M0,15L18,25.5L0,36Z" fill="#b4b6b7"/><circle cx="25" cy="13" r="13" fill="#b4b6b7"/><text x="25" y="21" font-family="Liberation Sans, sans-serif" font-size="22" font-weight="bold" text-anchor="middle" fill="#f0f0f0">9</text></svg>
<svg style="left:65px;top:1520px;" width="34" height="38" viewBox="0 0 34 38"><g fill="none" stroke="#5a5d59" stroke-width="3.4"><path d="M4,12A14,14 0 0 1 28,8"/><path d="M30,26A14,14 0 0 1 6,30"/><rect x="2.5" y="15.5" width="7" height="7"/><rect x="24.5" y="15.5" width="7" height="7"/></g><path d="M21,1L31,7L22,13Z M13,37L3,31L12,25Z" fill="#5a5d59"/></svg>
<div style="left:57.7px;top:1581.5px;width:46px;height:1.5px;background:#cdcdcd;"></div>
<div style="left:69.7px;top:1615px;width:25px;height:24px;background:#b4b6b7;"></div>
<svg style="left:64.5px;top:1680px;" width="36" height="30" viewBox="0 0 36 30"><path d="M0,5H8L11,0H25L28,5H36V30H0Z" fill="#b4b6b7"/><circle cx="18" cy="17" r="8.5" fill="#f0f0f0"/><circle cx="18" cy="17" r="4.5" fill="#b4b6b7"/></svg>
<svg style="left:64px;top:1746px;" width="38" height="37" viewBox="0 0 38 37"><g fill="#b4b6b7"><path d="M8,0L11,-1L15,5H21L25,-1L28,0L24,7H12Z" transform="translate(0,2)"/><rect x="7" y="9" width="20" height="22" rx="6"/><rect x="0" y="12" width="34" height="3.4"/><rect x="0" y="19" width="34" height="3.4"/><rect x="0" y="26" width="34" height="3.4"/></g><path d="M20,17H38V35L32,29L24,37L18,31L26,23Z" fill="#b4b6b7" stroke="#f0f0f0" stroke-width="2.4" paint-order="stroke"/></svg>
<svg style="left:75.5px;top:1821px;" width="18" height="13" viewBox="0 0 18 13"><path d="M1,1L7,6.5L1,12M10.5,1L16.5,6.5L10.5,12" stroke="#555" stroke-width="2.3" fill="none"/></svg>
<div style="left:132.2px;top:1373.7px;width:55.5px;height:54.5px;background:#cbcbcb;border-radius:7px;"></div>
<svg style="left:144px;top:1389px;" width="32" height="24" viewBox="0 0 32 24"><path d="M2.5,12L11.5,21L29.5,3" stroke="#5a5d59" stroke-width="5.6" fill="none"/></svg>
<div style="left:200.5px;top:1373.7px;width:55.5px;height:54.5px;background:#cbcbcb;border-radius:7px;"></div>
<svg style="left:211.5px;top:1384.5px;" width="34" height="34" viewBox="0 0 34 34"><circle cx="17" cy="17" r="14.6" fill="none" stroke="#5a5d59" stroke-width="4"/><path d="M7,27L27,7" stroke="#5a5d59" stroke-width="4"/></svg>
<div style="left:270.5px;top:1378px;width:1.6px;height:46px;background:#cdcdcd;"></div>
<div style="left:427px;top:1378px;width:1.6px;height:46px;background:#cdcdcd;"></div>
<div style="left:583px;top:1378px;width:1.6px;height:46px;background:#cdcdcd;"></div>
<svg style="left:299px;top:1385px;" width="34" height="33" viewBox="0 0 34 33"><path d="M8.5,0V24M0.5,17L8.5,25.5L16.5,17" stroke="#5a5d59" stroke-width="4.4" fill="none"/><text x="19" y="13" font-family="Liberation Sans, sans-serif" font-size="21" font-weight="bold" fill="#5a5d59">a</text><text x="20" y="32" font-family="Liberation Sans, sans-serif" font-size="21" font-weight="bold" fill="#5a5d59">z</text></svg>
<svg style="left:366.5px;top:1385px;" width="38" height="33" viewBox="0 0 38 33"><path d="M8.5,0V24M0.5,17L8.5,25.5L16.5,17" stroke="#5a5d59" stroke-width="4.4" fill="none"/><rect x="20" y="1" width="18" height="4.4" fill="#5a5d59"/><rect x="20" y="10" width="7" height="4.4" fill="#5a5d59"/><rect x="30" y="10" width="8" height="4.4" fill="#5a5d59"/><rect x="30" y="19" width="8" height="4.4" fill="#5a5d59"/></svg>
<svg style="left:455.5px;top:1384px;" width="32" height="35" viewBox="0 0 32 35"><path d="M0,0H32V4.5H0Z M0,30.5H32V35H0Z M16,7L25,16H7Z M16,28L25,19H7Z" fill="#5a5d59"/></svg>
<svg style="left:524px;top:1385px;" width="32" height="33" viewBox="0 0 32 33"><path d="M7,1H25L16,10.5Z M0,14.2H32V18.8H0Z M16,22.5L25,32H7Z" fill="#5a5d59"/></svg>
<svg style="left:615px;top:1387px;" width="26" height="30" viewBox="0 0 26 30"><path d="M13,30V3M2,13.5L13,2.5L24,13.5" stroke="#bcbebf" stroke-width="4" fill="none"/></svg>
<svg style="left:682.5px;top:1387px;" width="26" height="30" viewBox="0 0 26 30"><path d="M13,0V27M2,16.5L13,27.5L24,16.5" stroke="#bcbebf" stroke-width="4" fill="none"/></svg>
<svg style="left:750px;top:1385px;" width="28" height="33" viewBox="0 0 28 33"><path d="M0,3L13,0L26,3V15C26,23 20,28.5 13,31C6,28.5 0,23 0,15Z" fill="#bcbebf" transform="scale(1.06)"/><path d="M14,5L23,7V16C23,22 19.5,26 14,28Z" fill="#f0f0f0"/></svg>
<svg style="left:814px;top:1383px;" width="42" height="40" viewBox="0 0 42 40"><circle cx="17.5" cy="17.5" r="15" fill="none" stroke="#5a5d59" stroke-width="4.2"/><path d="M17.5,8V18.5L24.5,24" stroke="#5a5d59" stroke-width="4" fill="none"/><path d="M27,32H41L34,39.5Z" fill="#2b2b2b"/></svg>
<svg style="left:884.5px;top:1385px;" width="32" height="32" viewBox="0 0 32 32"><path d="M0,8H4.5V27.5H24V32H0Z" fill="#5a5d59"/><path d="M9,23V5L15.5,11.5L27,0L32,5L20.5,16.5L27,23Z" fill="#5a5d59"/></svg>
<svg style="left:952px;top:1385px;" width="32" height="32" viewBox="0 0 32 32"><path d="M0,8H4.5V27.5H24V32H0Z" fill="#5a5d59"/><path d="M14,0H32V18L25.5,11.5L13,24L8,19L20.5,6.5Z" fill="#5a5d59"/></svg>
<svg style="left:1019px;top:1384px;" width="40" height="40" viewBox="0 0 40 40"><path d="M12.20,4.96L12.54,0.38L19.46,0.38L19.80,4.96L21.75,6.04L23.66,7.18L27.80,5.19L31.26,11.19L27.47,13.77L27.50,16.00L27.47,18.23L31.26,20.81L27.80,26.81L23.66,24.82L21.75,25.96L19.80,27.04L19.46,31.62L12.54,31.62L12.20,27.04L10.25,25.96L8.34,24.82L4.20,26.81L0.74,20.81L4.53,18.23L4.50,16.00L4.53,13.77L0.74,11.19L4.20,5.19L8.34,7.18L10.25,6.04ZM22.16,16.00A6.16,6.16 0 1,0 9.84,16.00A6.16,6.16 0 1,0 22.16,16.00Z" fill="#5a5d59" fill-rule="evenodd" stroke="#5a5d59" stroke-width="1" stroke-linejoin="round"/><path d="M26,32H40L33,39.5Z" fill="#2b2b2b"/></svg>
<div style="left:119.5px;top:1437px;width:1323px;height:413.5px;background:#fff;"></div>
<div style="left:119.5px;top:1437px;width:1323px;height:51.6px;background:#cccccc;"></div>
<svg style="left:133px;top:1453px;" width="22" height="19" viewBox="0 0 22 19"><path d="M0,0H22L11,19Z" fill="#9b9ca6"/></svg>
<svg style="left:182.5px;top:1451px;" width="32" height="24" viewBox="0 0 32 24"><path d="M2.5,12.5L11.5,20.8L29.5,3" stroke="#3fa34a" stroke-width="6.8" fill="none" stroke-linejoin="miter"/></svg>
<span class="s" style="left:226.43px;top:1449.72px;font-size:31.4px;letter-spacing:0.825px;">HelloWorldTest</span>
<span class="s" style="left:462.35px;top:1449.72px;font-size:31.4px;color:#707070;letter-spacing:0.9px;">(tech.pdai.mockito)</span>
<span class="s" style="left:1340.32px;top:1451.27px;font-size:28.5px;letter-spacing:1.526px;">374</span>
<span class="s" style="left:1396.12px;top:1451.27px;font-size:28.5px;letter-spacing:0.107px;">ms</span>
<svg style="left:229px;top:1501px;" width="32" height="24" viewBox="0 0 32 24"><path d="M2.5,12.5L11.5,20.8L29.5,3" stroke="#3fa34a" stroke-width="6.8" fill="none" stroke-linejoin="miter"/></svg>
<span class="s" style="left:272.83px;top:1499.42px;font-size:31.4px;letter-spacing:0.811px;">helloWorldTest</span>
<span class="s" style="left:1340.32px;top:1501.47px;font-size:28.5px;color:#767676;letter-spacing:1.526px;">374</span>
<span class="s" style="left:1396.12px;top:1501.47px;font-size:28.5px;color:#767676;letter-spacing:0.107px;">ms</span>
<div style="left:1442.5px;top:1437px;width:1.6px;height:413.5px;background:#c9c9c9;"></div>
<svg style="left:1454.5px;top:1382.5px;" width="33" height="25" viewBox="0 0 33 25"><path d="M2.5,13.0L11.9,21.8L30.5,3" stroke="#3fa34a" stroke-width="7.4" fill="none" stroke-linejoin="miter"/></svg>
<span class="s" style="left:1498.31px;top:1378.42px;font-size:31.4px;letter-spacing:0.401px;">Tests passed: 1</span>
<span class="s" style="left:1732.68px;top:1378.42px;font-size:31.4px;color:#7a7a7a;letter-spacing:0.806px;">of 1 test – 374</span>
<span class="s" style="left:1948.43px;top:1378.42px;font-size:31.4px;color:#7a7a7a;letter-spacing:-0.157px;">ms</span>
<div style="left:1444px;top:1437px;width:2008.5px;height:413.5px;background:#fff;"></div>
<div style="left:1444px;top:1437px;width:2008.5px;height:1.6px;background:#c6c6c6;"></div>
<div style="left:1476.4px;top:1438.6px;width:1539.6px;height:5.8px;background:#e4f7d8;"></div>
<span class="m" style="left:1475.40px;top:1457.41px;font-size:33.2px;letter-spacing:-0.01px;">---- IntelliJ IDEA coverage runner ----</span>
<span class="m" style="left:1475.40px;top:1513.61px;font-size:33.2px;letter-spacing:-0.01px;">sampling ...</span>
<span class="m" style="left:1475.40px;top:1569.61px;font-size:33.2px;letter-spacing:-0.01px;">include patterns:</span>
<span class="m" style="left:1475.40px;top:1625.61px;font-size:33.2px;letter-spacing:-0.01px;">tech\.pdai\.mockito\..*</span>
<span class="m" style="left:1475.40px;top:1681.61px;font-size:33.2px;letter-spacing:-0.01px;">exclude patterns:</span>
<span class="m" style="left:1475.40px;top:1737.61px;font-size:33.2px;letter-spacing:-0.01px;">Class transformation time: 0.018027887s for 1475 classes or 1.222229627118644E-5s per class</span>
<div style="left:3416.5px;top:1437px;width:36px;height:413.5px;background:#f5f5f5;"></div>
<div style="left:3422.7px;top:1481px;width:23.6px;height:292px;background:#c9c9c9;border-radius:12px;"></div>
<div style="left:3452px;top:1437px;width:1.5px;height:413.5px;background:#c9c9c9;"></div>
<svg style="left:3478px;top:1462px;" width="26" height="30" viewBox="0 0 26 30"><path d="M13,30V3M2,13.5L13,2.5L24,13.5" stroke="#bcbebf" stroke-width="4" fill="none"/></svg>
<svg style="left:3478px;top:1530px;" width="26" height="30" viewBox="0 0 26 30"><path d="M13,0V27M2,16.5L13,27.5L24,16.5" stroke="#bcbebf" stroke-width="4" fill="none"/></svg>
<svg style="left:3474px;top:1597px;" width="34" height="36" viewBox="0 0 34 36"><g fill="#5a5d59"><rect x="0" y="0" width="30" height="4.4"/><rect x="0" y="13" width="14" height="4.4"/><rect x="0" y="26" width="5" height="4.4"/><rect x="8.5" y="26" width="5" height="4.4"/></g><path d="M17,15.2H26A6.5,6.5 0 0 1 26,28.2H21" stroke="#5a5d59" stroke-width="4.2" fill="none"/><path d="M24,20.5V36L15,28.2Z" fill="#5a5d59"/></svg>
<svg style="left:3474px;top:1662px;" width="32" height="32" viewBox="0 0 32 32"><g fill="#5a5d59"><rect x="0" y="4" width="10" height="4.2"/><rect x="0" y="13" width="10" height="4.2"/><rect x="0" y="27.5" width="31" height="4.4"/><path d="M19,0H23.4V13H31L21.2,24L11.4,13H19Z"/></g></svg>
<svg style="left:3473px;top:1733px;" width="36" height="34" viewBox="0 0 36 34"><g fill="#5a5d59"><rect x="8" y="0" width="20" height="6"/><path d="M0,9H36V27H29V19H7V27H0Z"/><path d="M10,22H26V34H10Z M13.5,25.5V30.5H22.5V25.5Z" fill-rule="evenodd"/></g><rect x="28.5" y="12" width="3.4" height="3.4" fill="#f0f0f0"/></svg>
<svg style="left:3481px;top:1821px;" width="18" height="13" viewBox="0 0 18 13"><path d="M1,1L7,6.5L1,12M10.5,1L16.5,6.5L10.5,12" stroke="#555" stroke-width="2.3" fill="none"/></svg>
<svg style="left:80px;top:1869.5px;" width="26" height="23" viewBox="0 0 26 23"><g fill="#5a5b55"><rect x="0" y="0" width="5.4" height="4.4"/><rect x="8.4" y="0" width="17.6" height="4.4"/><rect x="0" y="8.8" width="5.4" height="4.4"/><rect x="8.4" y="8.8" width="17.6" height="4.4"/><rect x="0" y="17.6" width="5.4" height="4.4"/><rect x="8.4" y="17.6" width="17.6" height="4.4"/></g></svg>
<span class="s" style="left:114.88px;top:1869.07px;font-size:28.5px;letter-spacing:0.379px;"><u>6</u>: TODO</span>
<div style="left:258.2px;top:1853px;width:173.5px;height:56px;background:#adb0b3;"></div>
<svg style="left:287px;top:1869px;" width="20" height="24" viewBox="0 0 20 24"><path d="M0,0L19,12L0,24Z" fill="#5e5e5e"/></svg>
<span class="s" style="left:322.37px;top:1869.07px;font-size:28.5px;letter-spacing:0.354px;"><u>4</u>: Run</span>
<svg style="left:464px;top:1866px;" width="32" height="32" viewBox="0 0 32 32"><rect x="12.6" y="4.2" width="8.4" height="24.5" fill="#f0a030" stroke="#5a5b55" stroke-width="2.2"/><path d="M0,9.5H10.5M6,5L10.5,9.5L6,14" stroke="#5a5b55" stroke-width="2.8" fill="none"/><path d="M22.5,20.5H31M26.5,16L31,20.5L26.5,25" stroke="#5a5b55" stroke-width="2.8" fill="none"/><path d="M16.8,0V4" stroke="#5a5b55" stroke-width="2.4"/></svg>
<span class="s" style="left:503.52px;top:1869.07px;font-size:28.5px;letter-spacing:0.45px;">Sequence Diagram</span>
<svg style="left:811px;top:1864px;" width="34" height="34" viewBox="0 0 34 34"><circle cx="17" cy="17" r="14.6" fill="none" stroke="#e5332a" stroke-width="4"/><path d="M3,17H31" stroke="#e5332a" stroke-width="4.6"/><path d="M7,17l2,-2l2,4l2,-4l2,4l2,-4l2,4l2,-4l2,4l2,-2" stroke="#fff" stroke-width="1.2" fill="none"/></svg>
<span class="s" style="left:852.12px;top:1869.07px;font-size:28.5px;letter-spacing:0.433px;">SonarLint</span>
<svg style="left:1032px;top:1867px;" width="28" height="27" viewBox="0 0 28 27"><rect x="0" y="0" width="28" height="27" fill="#5e5e5e"/><path d="M5,6.5L11.5,12.5L5,18.5" stroke="#f0f0f0" stroke-width="2.6" fill="none"/><rect x="13" y="18" width="10" height="2.6" fill="#f0f0f0"/></svg>
<span class="s" style="left:1070.37px;top:1869.07px;font-size:28.5px;letter-spacing:0.622px;">Terminal</span>
<svg style="left:1234px;top:1862px;" width="36" height="36" viewBox="0 0 36 36"><g transform="translate(2,4) rotate(-45 14 10) scale(.8)"><rect x="4" y="0" width="24" height="11" rx="1.5" fill="#5e5e5e"/><path d="M26,0l5,4v7h-5z" fill="#5e5e5e"/><rect x="12.5" y="10" width="7.5" height="30" fill="#5e5e5e"/></g></svg>
<span class="s" style="left:1274.66px;top:1869.07px;font-size:28.5px;letter-spacing:1.048px;">Build</span>
<svg style="left:1387px;top:1864px;" width="34" height="34" viewBox="0 0 34 34"><path d="M13,24.5A11.5,11.5 0 1 1 25,12" fill="none" stroke="#6e6e6e" stroke-width="3"/><path d="M13.5,6V13.5H8" stroke="#6e6e6e" stroke-width="2.6" fill="none"/><path d="M16,13L33,23L16,33Z" fill="#5e5e5e"/></svg>
<span class="s" style="left:1426.06px;top:1869.07px;font-size:28.5px;letter-spacing:1.102px;">Profiler</span>
<svg style="left:3102px;top:1864.8px;" width="34" height="34" viewBox="0 0 34 34"><path d="M16,0.5A15.5,15.5 0 0 1 31.5,16V31.5H16A15.5,15.5 0 0 1 16,0.5Z" fill="#3fa34a"/><text x="16" y="24" font-family="Liberation Sans, sans-serif" font-size="23" font-weight="bold" text-anchor="middle" fill="#fff">2</text></svg>
<span class="s" style="left:3141.06px;top:1869.07px;font-size:28.5px;letter-spacing:0.576px;">Event Log</span>
<svg style="left:3326px;top:1860px;" width="40" height="38" viewBox="0 0 40 38"><rect x="1" y="1" width="38" height="36" fill="#fdfdfd" stroke="#9a9a9a" stroke-width="2"/><rect x="4" y="4" width="32" height="6" fill="#c9cfe0"/><rect x="5" y="15" width="30" height="3.4" fill="#3fa34a"/><rect x="5" y="26" width="30" height="3.4" fill="#3fa34a"/><rect x="5" y="20.5" width="30" height="2" fill="#f0a030"/><rect x="5" y="31" width="30" height="2" fill="#f0a030"/><rect x="22" y="13.5" width="5" height="4" fill="#e5332a"/></svg>
<span class="s" style="left:3375.49px;top:1869.07px;font-size:28.5px;letter-spacing:-0.2px;">VisualGC</span>
<svg style="left:8px;top:1921px;" width="32" height="31" viewBox="0 0 32 31"><path d="M1.2,7V29.8H24" stroke="#5e5e5e" stroke-width="2.2" fill="none"/><rect x="6" y="1.2" width="24.8" height="24" fill="none" stroke="#5e5e5e" stroke-width="2.2"/></svg>
<span class="s" style="left:70.37px;top:1922.67px;font-size:28.5px;letter-spacing:0.569px;">Tests passed: 1 (5 minutes ago)</span>
<span class="s" style="left:3019.88px;top:1922.67px;font-size:28.5px;letter-spacing:1.132px;">20:27</span>
<span class="s" style="left:3126.66px;top:1922.67px;font-size:28.5px;letter-spacing:-0.993px;">LF</span>
<span class="s" style="left:3190.81px;top:1922.67px;font-size:28.5px;letter-spacing:1.319px;">UTF-8</span>
<span class="s" style="left:3310.97px;top:1922.67px;font-size:28.5px;letter-spacing:0.654px;">4 spaces</span>
<svg style="left:3457px;top:1920px;" width="30" height="30" viewBox="0 0 30 30"><path d="M4,12V7A6,6 0 0 1 16,7V10" stroke="#5a5b55" stroke-width="3.2" fill="none"/><rect x="9" y="13" width="20" height="16" fill="#5a5b55"/></svg>
<svg style="left:3520px;top:1917px;" width="34" height="36" viewBox="0 0 34 36"><path d="M6.2,12.2V8A6,6 0 0 1 12.2,2H19.8A6,6 0 0 1 25.8,8V12.2H30.8V15H1V12.2Z" fill="#5a5b55"/><path d="M7.2,15V20C7.2,26 11,29.6 16,29.6C21,29.6 24.8,26 24.8,20V15" fill="none" stroke="#5a5b55" stroke-width="2"/><path d="M7.2,18.5H4.8V21.8H7.4M24.8,18.5H27.2V21.8H24.6" fill="none" stroke="#5a5b55" stroke-width="1.6"/><circle cx="12.6" cy="19.4" r="1.7" fill="#5a5b55"/><circle cx="19.4" cy="19.4" r="1.7" fill="#5a5b55"/><path d="M12.2,24Q16,27 19.8,24" stroke="#5a5b55" stroke-width="1.7" fill="none"/><path d="M2.5,34.8C4,30.5 9,29.8 11,29.6C14,31.4 18,31.4 21,29.6C23,29.8 28,30.5 29.5,34.8Z" fill="#5a5b55"/></svg>
<svg style="left:3560px;top:1940px;" width="18" height="18" viewBox="0 0 18 18"><path d="M18,0V18H0A18,18 0 0 0 18,0Z" fill="#f4f4f4"/><path d="M18,2.5V18H2.5A15.5,15.5 0 0 0 18,2.5Z" fill="#1c1c1c"/></svg>
<div style="left:0px;top:67px;width:44px;height:212.5px;background:#b4b4b4;"></div>
<span class="s" style="left:7.90px;top:215.52px;font-size:29.2px;letter-spacing:0.091px;transform-origin:0 0;transform:rotate(-90deg);"><u>1</u>: Project</span>
<svg style="left:7px;top:228px;" width="27" height="21" viewBox="0 0 27 21"><path d="M0,0H10L13,4H27V21H0Z" fill="#5a5a5a"/></svg>
<span class="s" style="left:7.90px;top:467.11px;font-size:29.2px;letter-spacing:0.43px;transform-origin:0 0;transform:rotate(-90deg);"><u>Z</u>: Structure</span>
<svg style="left:8px;top:480px;" width="25" height="24" viewBox="0 0 25 24"><g fill="#6e6e6e"><rect x="14" y="0" width="10" height="9"/><rect x="0" y="7" width="10" height="7" /><rect x="0" y="16" width="10" height="8"/><rect x="14" y="14" width="10" height="10"/></g></svg>
<span class="s" style="left:7.90px;top:1783.86px;font-size:29.2px;letter-spacing:0.348px;transform-origin:0 0;transform:rotate(-90deg);"><u>2</u>: Favorites</span>
<svg style="left:4px;top:1791px;" width="32" height="31" viewBox="0 0 32 31"><path d="M16,0L20.5,10.5L32,11.8L23.5,19.6L25.9,31L16,25.2L6.1,31L8.5,19.6L0,11.8L11.5,10.5Z" fill="#595a55"/></svg>
<svg style="left:3537px;top:87px;" width="28" height="30" viewBox="0 0 28 30"><g fill="#5e5e5e"><ellipse cx="14" cy="8" rx="5" ry="5.5"/><ellipse cx="14" cy="21" rx="6.5" ry="8"/><path d="M9,12L1,4L0,5.5L7,14Z M19,12L27,4L28,5.5L21,14Z M7.5,17L0,15V17.5L7.5,19.5Z M20.5,17L28,15V17.5L20.5,19.5Z M8,23L1,30L3,31L10,25.5Z M20,23L27,30L25,31L18,25.5Z"/></g></svg>
<span class="s" style="left:3564.30px;top:128.94px;font-size:29.2px;letter-spacing:-1.377px;transform-origin:0 0;transform:rotate(90deg);">Ant</span>
<svg style="left:3537.5px;top:221.5px;" width="27" height="30" viewBox="0 0 27 30"><g fill="#5e5e5e"><ellipse cx="13.5" cy="5" rx="13.5" ry="5"/><path d="M0,8.5C3,13.5 24,13.5 27,8.5V13C24,18 3,18 0,13Z"/><path d="M0,16C3,21 24,21 27,16V20.5C24,25.5 3,25.5 0,20.5Z"/><path d="M0,23.5C3,28.5 24,28.5 27,23.5V26C24,31.5 3,31.5 0,26Z"/></g></svg>
<span class="s" style="left:3564.30px;top:260.81px;font-size:29.2px;letter-spacing:-0.124px;transform-origin:0 0;transform:rotate(90deg);">Database</span>
<svg style="left:3535px;top:440px;" width="32" height="24" viewBox="0 0 32 24"><text x="-1" y="21" font-family="Liberation Sans, sans-serif" font-size="37" font-weight="bold" font-style="italic" fill="#5e5e5e">m</text></svg>
<span class="s" style="left:3564.30px;top:477.31px;font-size:29.2px;letter-spacing:-0.66px;transform-origin:0 0;transform:rotate(90deg);">Maven</span>
<div style="left:3527px;top:1631px;width:51px;height:220px;background:#b4b6b8;"></div>
<svg style="left:3538.5px;top:1657px;" width="27" height="30" viewBox="0 0 27 30"><path d="M0,3L13.5,0L27,3V14C27,22 21,27.5 13.5,30C6,27.5 0,22 0,14Z" fill="#5a5d5c"/><path d="M13.5,4.5L22.5,6.3V14C22.5,19 19,23 13.5,25Z" fill="#b4b6b8"/></svg>
<span class="s" style="left:3564.30px;top:1697.54px;font-size:29.2px;letter-spacing:-0.259px;transform-origin:0 0;transform:rotate(90deg);">Coverage</span>
</div></body></html>
